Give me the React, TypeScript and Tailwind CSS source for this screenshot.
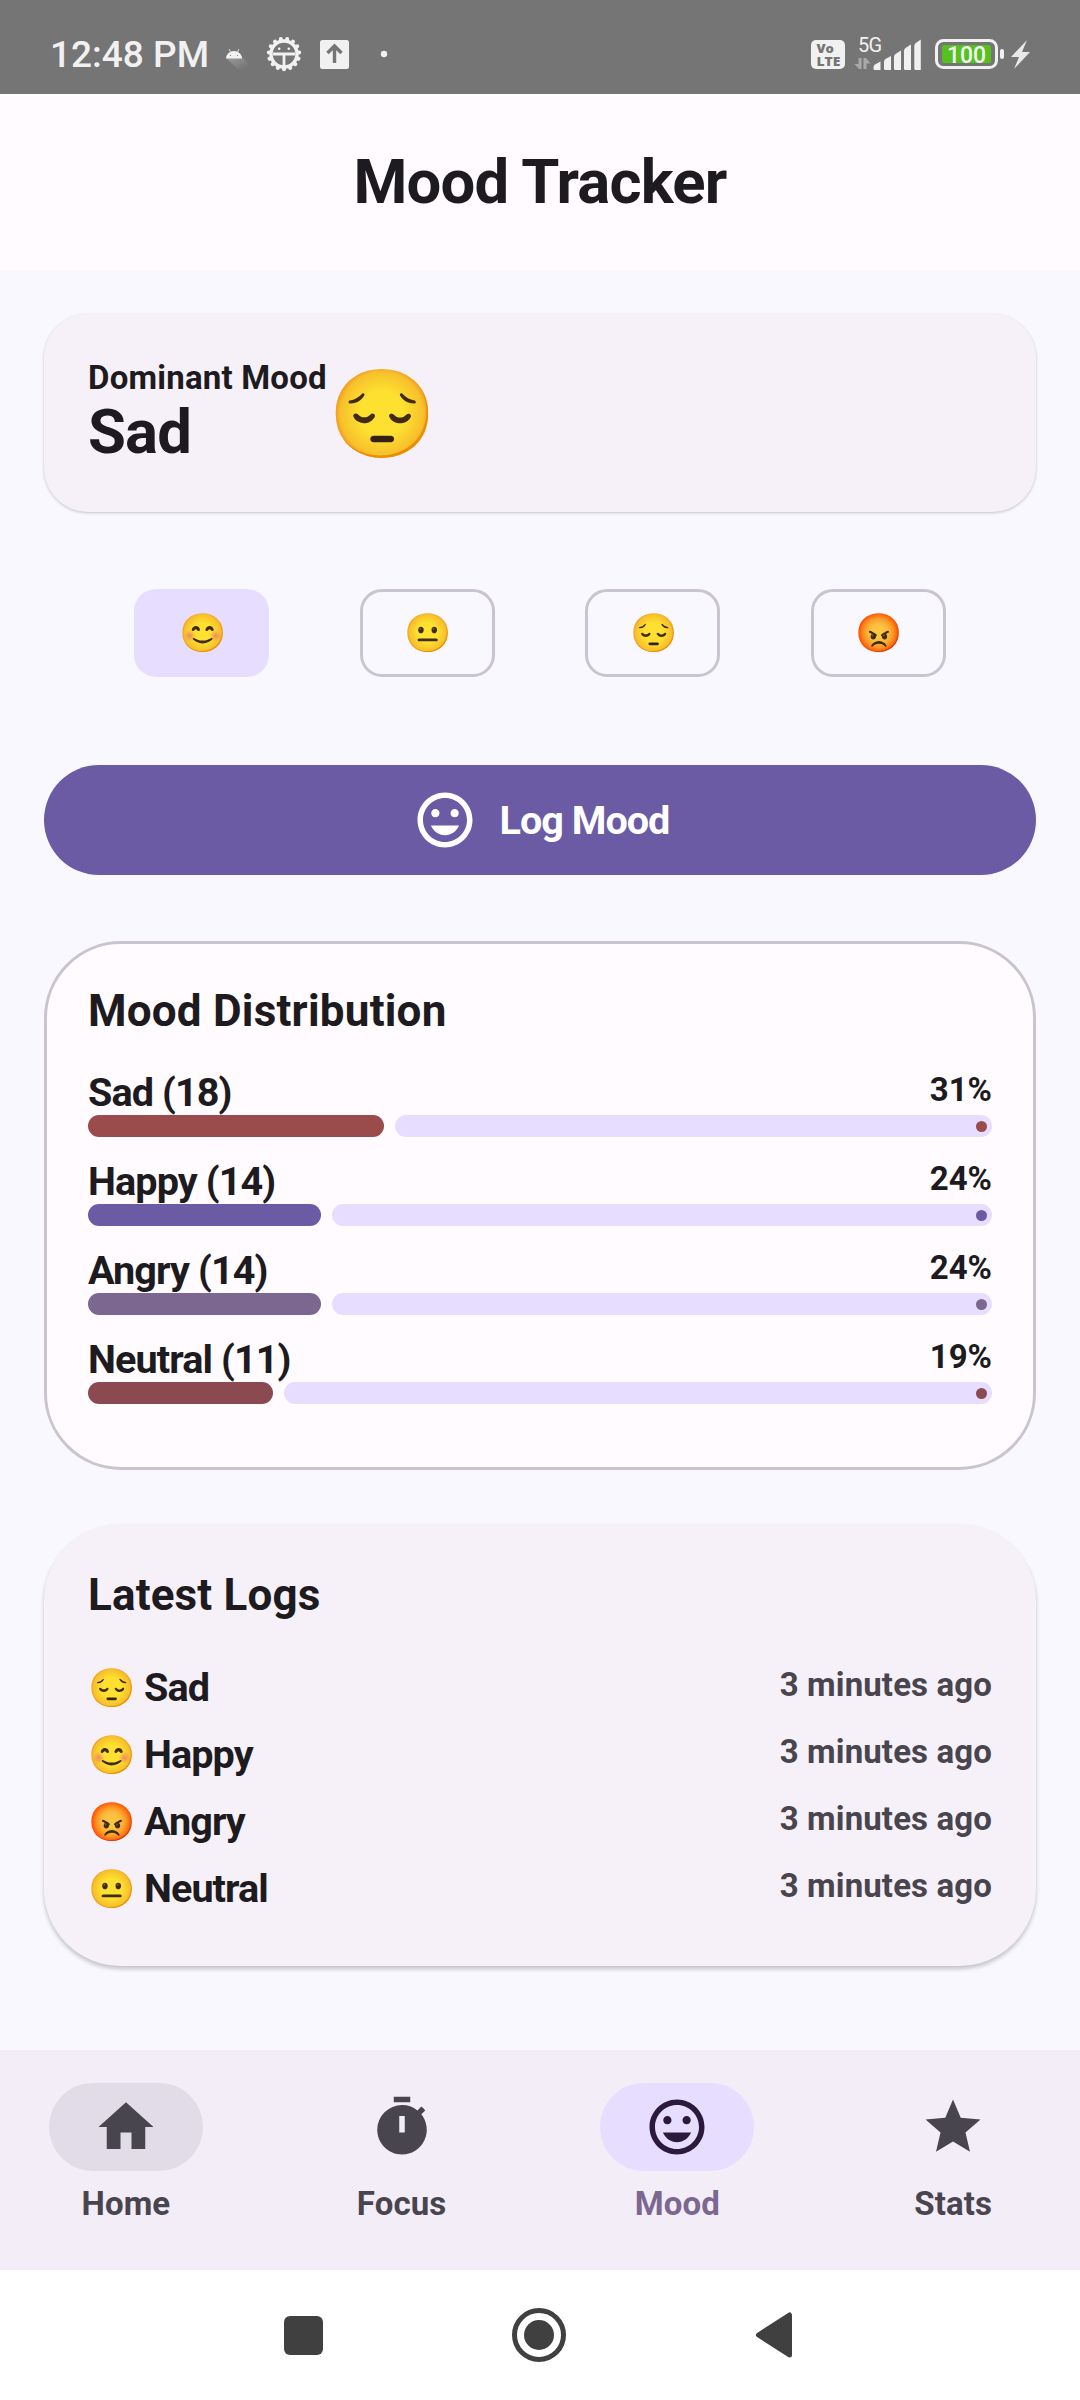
import type { ReactNode } from "react";
import { MdHome, MdTimer, MdStar, MdMood } from "react-icons/md";

type Mood = "happy" | "neutral" | "sad" | "angry";
const glyph: Record<Mood, string> = { happy: "😊", neutral: "😐", sad: "😔", angry: "😡" };

const distribution = [
  { label: "Sad (18)", pct: "31%", share: 18 / 57, color: "#9a4b4b" },
  { label: "Happy (14)", pct: "24%", share: 14 / 57, color: "#6b5ba5" },
  { label: "Angry (14)", pct: "24%", share: 14 / 57, color: "#7b6790" },
  { label: "Neutral (11)", pct: "19%", share: 11 / 57, color: "#8b4a52" },
];

const logs: { mood: Mood; label: string }[] = [
  { mood: "sad", label: "Sad" },
  { mood: "happy", label: "Happy" },
  { mood: "angry", label: "Angry" },
  { mood: "neutral", label: "Neutral" },
];

const gearTeeth = Array.from({ length: 15 }, (_, i) => (i * 360) / 15);

function StatusBar() {
  return (
    <div className="flex h-[94px] items-start justify-between bg-[#757575] text-[#f1f1f1]">
      <div className="flex h-full items-start">
        <span className="ml-[50px] mt-[33px] w-[174px] whitespace-nowrap text-[37px] font-medium leading-[44px]">12:48 PM</span>
        <svg className="mt-[30px] h-12 w-[170px]" viewBox="224 30 170 48">
          <defs>
            <linearGradient id="tail" x1="0" y1="0" x2="1" y2="1">
              <stop offset="0.2" stopColor="#949494" />
              <stop offset="0.8" stopColor="#757575" />
            </linearGradient>
          </defs>
          <path d="M226 58L241 72H249V64L242 57Z" fill="url(#tail)" />
          <path d="M226 58.500a8 7.500 0 0 1 16 0z" fill="#f1f1f1" />
          <path d="M230.500 52l-1.500-3M237.500 52l1.500-3" stroke="#f1f1f1" strokeWidth=".8" />
          <circle cx="230.500" cy="55.500" r=".6" fill="#757575" />
          <circle cx="237.500" cy="55.500" r=".6" fill="#757575" />
          <g fill="none" stroke="#f1f1f1">
            <circle cx="284" cy="54" r="13" strokeWidth="3.400" />
            {gearTeeth.map((a) => (
              <path key={a} d="M284 40v-1.300" strokeWidth="4" strokeLinecap="round" transform={`rotate(${a + 12} 284 54)`} />
            ))}
            <path d="M273 54H295M284 54V66" strokeWidth="2.800" />
          </g>
          <circle cx="279.200" cy="48.700" r="1.300" fill="#f1f1f1" />
          <circle cx="288.800" cy="48.700" r="1.300" fill="#f1f1f1" />
          <rect x="320" y="40" width="29" height="29" rx="2.500" fill="#f1f1f1" />
          <path d="M334.500 63V47M327.500 53l7-7 7 7" fill="none" stroke="#757575" strokeWidth="3.400" />
          <circle cx="384" cy="54" r="3.200" fill="#f1f1f1" />
        </svg>
      </div>
      <svg className="mr-[45px] mt-[30px] h-12 w-[230px]" viewBox="805 30 230 48">
        <rect x="811" y="40" width="34" height="29" rx="5" fill="#f1f1f1" />
        <text x="816.500" y="53" fontFamily="Open Sans" fontWeight="800" fontSize="11.500" fill="#757575" textLength="17.500" lengthAdjust="spacingAndGlyphs">Vo</text>
        <text x="816.500" y="65.500" fontFamily="Open Sans" fontWeight="800" fontSize="12" fill="#757575" textLength="24" lengthAdjust="spacingAndGlyphs">LTE</text>
        <text x="858" y="52" fontFamily="Roboto" fontSize="20" fill="#f1f1f1" textLength="24">5G</text>
        <g fill="#a9a9a9">
          <path d="M858.500 58H861.500V69H859L854.500 64H858.500Z" />
          <path d="M863.500 58H866L870.500 63.500H866.500V69H863.500Z" />
        </g>
        <g fill="#f1f1f1">
          <path d="M873.500 67.500q0-2 1.500-3l5.500-3V70H875q-1.500 0-1.500-1.500z" />
          <path d="M884 62q0-2 1.500-3l5.500-3V70H885.500q-1.500 0-1.500-1.500z" />
          <path d="M894 57q0-2 1.500-3l5.500-3.500V70H895.500q-1.500 0-1.500-1.500z" />
          <path d="M904 51q0-2 1.500-3l5.500-3.500V70H905.500q-1.500 0-1.500-1.500z" />
          <path d="M914.300 46q0-2 1.500-3l5-3.500V70H915.800q-1.500 0-1.500-1.500z" />
        </g>
        <rect x="936.500" y="40.500" width="60" height="27" rx="7" fill="none" stroke="#f1f1f1" strokeWidth="3" />
        <rect x="942" y="45" width="49" height="18" rx="2" fill="#56c01f" />
        <rect x="1000" y="49" width="4" height="10" rx="2" fill="#f1f1f1" />
        <text x="947" y="62.500" fontFamily="Roboto" fontWeight="500" fontSize="23" fill="#f1f1f1" textLength="39">100</text>
        <path d="M1027 40L1011 57H1019L1014 69L1030 52H1022Z" fill="#e8e8e8" />
      </svg>
    </div>
  );
}

function Emoji({ mood, size }: { mood: Mood; size: "sm" | "lg" }) {
  return size === "lg" ? (
    <span className="flex w-[94px] justify-center text-[87px] leading-[92px]">{glyph[mood]}</span>
  ) : (
    <span className="flex w-[42px] justify-center text-[38px] leading-[41px]">{glyph[mood]}</span>
  );
}

function MoodChips() {
  const moods: Mood[] = ["happy", "neutral", "sad", "angry"];
  return (
    <div className="mt-[77px] flex justify-evenly">
      {moods.map((m, i) => (
        <button
          key={m}
          className={`flex h-[88px] w-[135px] items-center justify-center rounded-[22px] pl-px ${
            i === 0 ? "bg-[#e7deff]" : "border-3 border-[#cac4cf]"
          }`}
        >
          <Emoji mood={m} size="sm" />
        </button>
      ))}
    </div>
  );
}

function NavItem({ label, icon, pill, text }: { label: string; icon: ReactNode; pill: string; text: string }) {
  return (
    <div className="flex flex-1 flex-col items-center pt-[33px]">
      <div className={`flex h-[88px] w-[154px] items-center justify-center rounded-full ${pill}`}>{icon}</div>
      <span className={`mt-[11px] text-[33px] font-bold leading-[44px] tracking-[0.1px] ${text}`}>{label}</span>
    </div>
  );
}

export default function App() {
  return (
    <div className="flex h-[2400px] w-[1080px] flex-col overflow-hidden bg-[#f9f8ff] font-[Roboto,sans-serif] text-[#1d1b20]">
      <StatusBar />
      <header className="flex h-[176px] items-center justify-center bg-[#fffbff]">
        <h1 className="text-[61.600px] font-bold leading-[72px] tracking-[-0.8px]">Mood Tracker</h1>
      </header>

      <main className="flex flex-1 flex-col px-11 pt-11">
        <section className="flex h-[198px] rounded-[44px] bg-[#f6f1f9] px-11 pt-[42px] shadow-[0_1px_3px_rgba(0,0,0,0.22)]">
          <div className="w-[240px]">
            <p className="whitespace-nowrap text-[33px] font-bold leading-[44px] tracking-[0.2px]">Dominant Mood</p>
            <p className="text-[61.600px] font-bold leading-[64px] tracking-[-0.8px]">Sad</p>
          </div>
          <div className="ml-[7px] mt-[12px]">
            <Emoji mood="sad" size="lg" />
          </div>
        </section>

        <MoodChips />

        <button className="mt-[88px] flex h-[110px] items-center justify-center rounded-full bg-[#6b5ba5] pl-px text-white">
          <MdMood className="size-[66px]" />
          <span className="ml-[22px] mt-[2px] text-[39.600px] font-bold leading-[48px] tracking-[-1px]">Log Mood</span>
        </button>

        <section className="mt-[66px] h-[529px] rounded-[77px] border-3 border-[#cac4cf] bg-[#fffbff] px-[41px] pt-[41px]">
          <h2 className="text-[44px] font-bold leading-[52px] tracking-[0.22px]">Mood Distribution</h2>
          <div className="mt-[30px] flex flex-col gap-[19px]">
            {distribution.map((d) => (
              <div key={d.label} className="h-[70px]">
                <div className="flex h-12 justify-between">
                  <span className="text-[39.600px] font-bold leading-[52px] tracking-[-0.9px]">{d.label}</span>
                  <span className="text-[33px] font-bold leading-[46px]">{d.pct}</span>
                </div>
                <div className="flex h-[22px] gap-[11px]">
                  <div className="rounded-full" style={{ width: d.share * 904 + 11, backgroundColor: d.color }} />
                  <div className="flex flex-1 items-center justify-end rounded-full bg-[#e7deff] pr-[5.500px]">
                    <div className="size-[11px] rounded-full" style={{ backgroundColor: d.color }} />
                  </div>
                </div>
              </div>
            ))}
          </div>
        </section>

        <section className="mt-[54px] h-[442px] rounded-[77px] bg-[#f6f1f9] px-11 pt-[45px] shadow-[0_3px_4px_rgba(0,0,0,0.22)]">
          <h2 className="text-[44px] font-bold leading-[52px] tracking-[0.15px]">Latest Logs</h2>
          <div className="mt-[38px]">
            {logs.map((l) => (
              <div key={l.label} className="flex h-[67px] items-start">
                <div className="ml-[2px] mt-[9px]">
                  <Emoji mood={l.mood} size="sm" />
                </div>
                <span className="ml-[12px] mt-1 text-[39.600px] font-bold leading-[50px] tracking-[-0.95px]">{l.label}</span>
                <span className="ml-auto mt-1 text-[33px] font-bold leading-[44px] tracking-[0.12px] text-[#49454f]">3 minutes ago</span>
              </div>
            ))}
          </div>
        </section>
      </main>

      <nav className="-ml-px flex h-[220px] gap-[22px] bg-[#f3edf8]">
        <NavItem label="Home" icon={<MdHome className="size-[66px] text-[#49454f]" />} pill="bg-[#e1dce7]" text="text-[#49454f]" />
        <NavItem label="Focus" icon={<MdTimer className="size-[66px] text-[#49454f]" />} pill="" text="text-[#49454f]" />
        <NavItem label="Mood" icon={<MdMood className="size-[66px] text-[#2c1a3d]" />} pill="bg-[#e7deff]" text="text-[#7b6790]" />
        <NavItem label="Stats" icon={<MdStar className="size-[66px] text-[#49454f]" />} pill="" text="text-[#49454f]" />
      </nav>

      <div className="flex h-[130px] items-center gap-[189px] bg-white pl-[284px]">
        <div className="size-[39px] rounded-[6px] bg-[#404040]" />
        <div className="flex size-[54px] items-center justify-center rounded-full border-[5px] border-[#404040]">
          <div className="size-[30px] rounded-full bg-[#404040]" />
        </div>
        <svg className="h-[48px] w-[38px]" viewBox="0 0 38 48">
          <path d="M3.500 24L34.500 4V44Z" fill="#404040" stroke="#404040" strokeWidth="5" strokeLinejoin="round" />
        </svg>
      </div>
    </div>
  );
}
